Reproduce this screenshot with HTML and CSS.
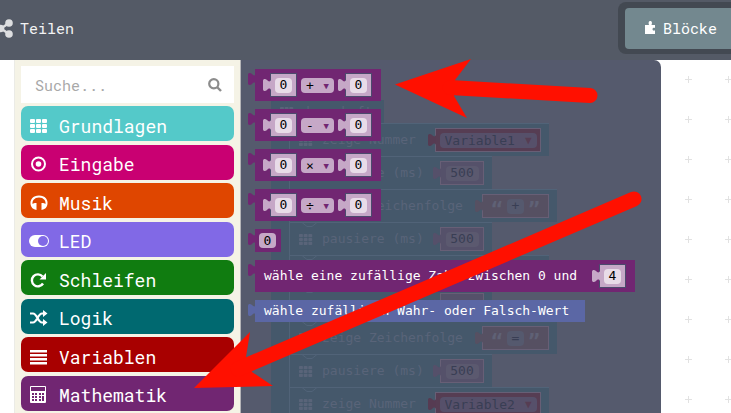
FILE: index.html
```html
<!DOCTYPE html>
<html lang="de">
<head>
<meta charset="utf-8">
<title>Mathematik</title>
<meta name="viewport" content="width=device-width, initial-scale=1">
<link rel="stylesheet" href="styles.css">
</head>
<body>
<svg class="defs" aria-hidden="true">
  <symbol id="tab" viewBox="0 0 8 14"><path d="M8 2C7 4 5.500 3.800 4 2C2.500 .5 0 .5 0 3V11C0 13.500 2.500 13.500 4 12C5.500 10.200 7 10 8 12Z"/></symbol>
  <symbol id="grid" viewBox="0 0 18 14"><path d="M0 1q0-1 1-1h3q1 0 1 1v2q0 1-1 1H1q-1 0-1-1zM6 1q0-1 1-1h3q1 0 1 1v2q0 1-1 1H7q-1 0-1-1zM12 1q0-1 1-1h3q1 0 1 1v2q0 1-1 1h-3q-1 0-1-1zM0 6q0-1 1-1h3q1 0 1 1v2q0 1-1 1H1q-1 0-1-1zM6 6q0-1 1-1h3q1 0 1 1v2q0 1-1 1H7q-1 0-1-1zM12 6q0-1 1-1h3q1 0 1 1v2q0 1-1 1h-3q-1 0-1-1zM0 11q0-1 1-1h3q1 0 1 1v2q0 1-1 1H1q-1 0-1-1zM6 11q0-1 1-1h3q1 0 1 1v2q0 1-1 1H7q-1 0-1-1zM12 11q0-1 1-1h3q1 0 1 1v2q0 1-1 1h-3q-1 0-1-1z"/></symbol>
  <symbol id="notch" viewBox="0 0 16 5"><path d="M0 .5L5 4.500H10L15 .5"/></symbol>
</svg>

<header class="bar">
  <a class="share" href="#teilen">
    <svg class="share-icon" viewBox="0 0 16 19" aria-hidden="true"><path d="M12 4L4 9.500L12 15" fill="none" stroke="currentColor" stroke-width="2.400"/><circle cx="12" cy="4" r="3.800"/><circle cx="3.500" cy="9.500" r="3.800"/><circle cx="12" cy="15" r="3.800"/></svg>
    Teilen
  </a>
  <div class="switch">
    <button class="mode" type="button">
      <svg class="puzzle" viewBox="0 0 11 13" aria-hidden="true"><path d="M0 4H4.200C3.300 2.500 3.400 0 5.300 0S7.300 2.500 6.400 4H10V7C9 6.300 7.500 6.800 7.500 8.200S9 10 10 9.300V13H0Z"/></svg>
      Blöcke
    </button>
  </div>
</header>

<main class="editor">
  <nav class="toolbox" aria-label="Kategorien">
    <div class="search">
      <input class="search-text" type="search" placeholder="Suche..." aria-label="Suche">
      <svg class="search-icon" viewBox="0 0 14 14" aria-hidden="true"><circle cx="5.800" cy="5.800" r="4.600" fill="none" stroke="currentColor" stroke-width="2.200"/><path d="M9 9L13 13" stroke="currentColor" stroke-width="2.400"/></svg>
    </div>
    <div class="categories">
      <button type="button" class="category basic"><svg viewBox="0 0 20 20"><use href="#grid" x="1" y="3" width="18" height="14"/></svg>Grundlagen</button>
      <button type="button" class="category input"><svg viewBox="0 0 20 20"><circle cx="9.500" cy="10" r="6.500" fill="none" stroke="currentColor" stroke-width="2"/><circle cx="9.500" cy="10" r="2.800"/></svg>Eingabe</button>
      <button type="button" class="category music"><svg viewBox="0 0 20 20"><path d="M3 13C1 7 5 3.500 10 3.500S19 7 17 13" fill="none" stroke="currentColor" stroke-width="2"/><path d="M7.500 10V17C4 16.500 2 14.500 2 12C3.500 10.500 5 10 7.500 10ZM12.500 10V17C16 16.500 18 14.500 18 12C16.500 10.500 15 10 12.500 10Z"/></svg>Musik</button>
      <button type="button" class="category led"><svg viewBox="0 0 20 20"><rect x="0" y="4" width="20" height="12" rx="6"/><circle class="knob" cx="14" cy="10" r="5"/></svg>LED</button>
      <button type="button" class="category loops"><svg viewBox="0 0 20 20"><path d="M14 13.500A6 6 0 1 1 13.500 6.500" fill="none" stroke="currentColor" stroke-width="2.400"/><path d="M17 3V9.500H10.500Z"/></svg>Schleifen</button>
      <button type="button" class="category logic"><svg viewBox="0 0 20 20"><path d="M1 5.500H4C8 5.500 9 14.500 13 14.500H15M1 14.500H4C8 14.500 9 5.500 13 5.500H15" fill="none" stroke="currentColor" stroke-width="2.200"/><path d="M14 2L18.500 5.500L14 9ZM14 11L18.500 14.500L14 18Z"/></svg>Logik</button>
      <button type="button" class="category variables"><svg viewBox="0 0 20 20"><path d="M1 3H18V5.500H1ZM1 7H18V9.500H1ZM1 11H18V13.500H1ZM1 15H18V17.500H1Z"/></svg>Variablen</button>
      <button type="button" class="category math"><svg viewBox="0 0 20 20"><path fill-rule="evenodd" d="M2 1H16Q17 1 17 2V17Q17 18 16 18H2Q1 18 1 17V2Q1 1 2 1ZM2 2V6H16V2ZM3 8V10H5V8ZM6 8V10H8V8ZM10 8V10H12V8ZM13 8V10H15V8ZM3 11V13H5V11ZM6 11V13H8V11ZM10 11V13H12V11ZM13 11V16H15V11ZM3 14V16H5V14ZM6 14V16H8V14ZM10 14V16H12V14Z"/></svg>Mathematik</button>
    </div>
  </nav>

  <section class="canvas">
    <div class="flyout">
      <div class="program">
        <div class="hat"><svg class="dots"><use href="#grid"/></svg>dauerhaft</div>
        <div class="stack">
          <div class="row var"><svg class="dots"><use href="#grid"/></svg>zeige Nummer
            <span class="plug dim red"><svg class="tab"><use href="#tab"/></svg><span class="box"><span class="drop"><select aria-label="Variable"><option>Variable1</option></select><i>▼</i></span></span></span></div>
          <div class="row num"><svg class="notch"><use href="#notch"/></svg><svg class="dots"><use href="#grid"/></svg>pausiere (ms)
            <span class="plug dim"><svg class="tab"><use href="#tab"/></svg><span class="box"><input class="pill" value="500" aria-label="Pause"></span></span></div>
          <div class="row text"><svg class="notch"><use href="#notch"/></svg><svg class="dots"><use href="#grid"/></svg>zeige Zeichenfolge
            <span class="plug dim quote"><svg class="tab"><use href="#tab"/></svg><span class="box"><b>“</b><input class="pill" value="+" aria-label="Zeichenfolge"><b>”</b></span></span></div>
          <div class="row num"><svg class="notch"><use href="#notch"/></svg><svg class="dots"><use href="#grid"/></svg>pausiere (ms)
            <span class="plug dim"><svg class="tab"><use href="#tab"/></svg><span class="box"><input class="pill" value="500" aria-label="Pause"></span></span></div>
          <div class="row var"><svg class="notch"><use href="#notch"/></svg></div>
          <div class="row num"><svg class="notch"><use href="#notch"/></svg>
            <span class="plug dim"><svg class="tab"><use href="#tab"/></svg><span class="box"></span></span></div>
          <div class="row text"><svg class="notch"><use href="#notch"/></svg><svg class="dots"><use href="#grid"/></svg>zeige Zeichenfolge
            <span class="plug dim quote"><svg class="tab"><use href="#tab"/></svg><span class="box"><b>“</b><input class="pill" value="=" aria-label="Zeichenfolge"><b>”</b></span></span></div>
          <div class="row num"><svg class="notch"><use href="#notch"/></svg><svg class="dots"><use href="#grid"/></svg>pausiere (ms)
            <span class="plug dim"><svg class="tab"><use href="#tab"/></svg><span class="box"><input class="pill" value="500" aria-label="Pause"></span></span></div>
          <div class="row var"><svg class="notch"><use href="#notch"/></svg><svg class="dots"><use href="#grid"/></svg>zeige Nummer
            <span class="plug dim red"><svg class="tab"><use href="#tab"/></svg><span class="box"><span class="drop"><select aria-label="Variable"><option>Variable2</option></select><i>▼</i></span></span></span></div>
        </div>
      </div>

      <div class="blocks">
        <div class="block"><svg class="tab"><use href="#tab"/></svg><div class="body">
          <span class="plug"><svg class="tab"><use href="#tab"/></svg><span class="box"><input class="pill" value="0" aria-label="Linker Wert"></span></span>
          <span class="drop"><select aria-label="Operator"><option>+</option></select><i>▼</i></span>
          <span class="plug"><svg class="tab"><use href="#tab"/></svg><span class="box"><input class="pill" value="0" aria-label="Rechter Wert"></span></span></div></div>
        <div class="block"><svg class="tab"><use href="#tab"/></svg><div class="body">
          <span class="plug"><svg class="tab"><use href="#tab"/></svg><span class="box"><input class="pill" value="0" aria-label="Linker Wert"></span></span>
          <span class="drop"><select aria-label="Operator"><option>-</option></select><i>▼</i></span>
          <span class="plug"><svg class="tab"><use href="#tab"/></svg><span class="box"><input class="pill" value="0" aria-label="Rechter Wert"></span></span></div></div>
        <div class="block"><svg class="tab"><use href="#tab"/></svg><div class="body">
          <span class="plug"><svg class="tab"><use href="#tab"/></svg><span class="box"><input class="pill" value="0" aria-label="Linker Wert"></span></span>
          <span class="drop"><select aria-label="Operator"><option>×</option></select><i>▼</i></span>
          <span class="plug"><svg class="tab"><use href="#tab"/></svg><span class="box"><input class="pill" value="0" aria-label="Rechter Wert"></span></span></div></div>
        <div class="block"><svg class="tab"><use href="#tab"/></svg><div class="body">
          <span class="plug"><svg class="tab"><use href="#tab"/></svg><span class="box"><input class="pill" value="0" aria-label="Linker Wert"></span></span>
          <span class="drop"><select aria-label="Operator"><option>÷</option></select><i>▼</i></span>
          <span class="plug"><svg class="tab"><use href="#tab"/></svg><span class="box"><input class="pill" value="0" aria-label="Rechter Wert"></span></span></div></div>
        <div class="block"><svg class="tab"><use href="#tab"/></svg><div class="body value"><input class="pill" value="0" aria-label="Zahl"></div></div>
        <div class="block"><svg class="tab"><use href="#tab"/></svg><div class="body random">wähle eine zufällige Zahl zwischen 0 und
          <span class="plug"><svg class="tab"><use href="#tab"/></svg><span class="box"><input class="pill" value="4" aria-label="Obergrenze"></span></span></div></div>
        <div class="block bool"><svg class="tab"><use href="#tab"/></svg><div class="body coin">wähle zufälligen Wahr- oder Falsch-Wert</div></div>
      </div>
    </div>
  </section>
</main>

<svg class="arrows" viewBox="0 0 731 413" aria-hidden="true">
  <path d="M395 84.500L471 59L455 80L454 96L467 118Z"/>
  <path class="shaft" d="M450 87.500L590 95.500"/>
  <path d="M194 388L250 332L246 357L252 372L273 386Z"/>
  <path class="shaft" d="M238 369L634 199"/>
</svg>
</body>
</html>
```
FILE: styles.css
```css
* { box-sizing: border-box; }

body {
  margin: 0;
  height: 100vh;
  display: flex;
  flex-direction: column;
  overflow: hidden;
  background: #fff;
  font-family: "Roboto Mono", "DejaVu Sans Mono", monospace;
  font-size: 15px;
}

svg { fill: currentColor; flex: none; }
button, input, select { font: inherit; color: inherit; border: 0; margin: 0; }
.defs { position: absolute; width: 0; height: 0; }

/* Header */
.bar {
  flex: none;
  height: 60px;
  display: flex;
  justify-content: space-between;
  align-items: flex-start;
  background: #545a66;
  color: #f2f3f4;
}
.share {
  height: 56px;
  display: flex;
  align-items: center;
  gap: 7px;
  color: inherit;
  text-decoration: none;
}
.share-icon { width: 16px; height: 19px; margin-left: -3px; color: #dddee0; }
.switch {
  margin-top: 2px;
  padding: 6px 0 5px 7px;
  border-radius: 8px 0 0 8px;
  background: #434952;
}
.mode {
  width: 106px;
  height: 41px;
  padding: 0 0 2px 20px;
  display: flex;
  align-items: center;
  gap: 7px;
  border-radius: 4px 0 0 4px;
  background: #73888f;
  color: #fff;
}
.puzzle { width: 11px; height: 13px; }

/* Toolbox */
.editor { flex: 1; min-height: 0; display: flex; padding-left: 14px; }
.toolbox {
  flex: none;
  width: 227px;
  padding: 6px 6px 2px 6px;
  display: flex;
  flex-direction: column;
  gap: 3px;
  border-left: 1px solid #ebebe6;
  border-right: 1px solid #b5b5b8;
  background: #f5f3e6;
}
.search {
  height: 37px;
  padding: 0 12px 0 14px;
  display: flex;
  align-items: center;
  background: #fff;
  color: #8c8c8c;
}
.search-text { flex: 1; min-width: 0; padding: 0; background: none; outline: 0; }
.search-text::placeholder { color: #a8a8a8; opacity: 1; }
.search-icon { width: 14px; height: 14px; }
.categories { flex: 1; display: flex; flex-direction: column; justify-content: space-between; }
.category {
  height: 35px;
  padding: 4px 8px 0;
  display: flex;
  align-items: center;
  gap: 10px;
  border-radius: 7px;
  color: #fff;
  font-size: 18px;
  text-align: left;
}
.category svg { width: 20px; height: 20px; }
.basic { background: #54c9c9; }
.input { background: #c90072; }
.music { background: #df4600; }
.led { background: #8169e6; }
.loops { background: #107c10; }
.logic { background: #006970; }
.variables { background: #a80000; }
.math { background: #712672; }
.knob { fill: #8169e6; }

/* Canvas and flyout */
.canvas {
  flex: 1;
  min-width: 0;
  background:
    conic-gradient(from 270deg at 7px 1px, #e2e2e2 90deg, transparent 0) 4px 19px / 40px 40px,
    conic-gradient(from 270deg at 1px 7px, #e2e2e2 90deg, transparent 0) 7px 16px / 40px 40px,
    #fff;
}
.flyout {
  position: relative;
  width: 420px;
  height: 100%;
  overflow: hidden;
  border-radius: 0 7px 0 0;
  background: #555a6d;
  font-family: "DejaVu Sans Mono", monospace;
  font-size: 13px;
  line-height: 16px;
}
.blocks {
  position: relative;
  padding: 9px 0 0 7px;
  display: flex;
  flex-direction: column;
  align-items: flex-start;
  gap: 8px;
}
.block { display: flex; align-items: flex-start; color: #712672; }
.tab { width: 8px; height: 14px; margin: 3px -1px 0 0; }
.body {
  height: 32px;
  padding: 0 9px 0 8px;
  display: flex;
  align-items: center;
  gap: 4px;
  background: #712672;
  color: #fff;
}
.plug { display: flex; align-items: center; color: #c6a8c7; }
.plug .tab { margin-top: 0; position: relative; }
.box {
  width: 27px;
  height: 24px;
  display: flex;
  align-items: center;
  justify-content: center;
  border: 1px solid #4b4a6d;
  background: #c6a8c7;
}
.pill {
  width: 17px;
  height: 15px;
  padding: 0;
  border-radius: 4px;
  background: #e8dce8;
  color: #000;
  text-align: center;
}
.drop {
  width: 33px;
  height: 15px;
  display: grid;
  align-items: center;
  border-radius: 4px;
  background: #c6a8c7;
  color: #000;
}
.drop select {
  grid-area: 1 / 1;
  width: 100%;
  height: 15px;
  padding: 0 0 0 5px;
  appearance: none;
  background: none;
}
.drop i {
  grid-area: 1 / 1;
  justify-self: end;
  padding-right: 5px;
  color: #712672;
  font-size: 9px;
  font-style: normal;
  pointer-events: none;
}
.value { height: 23px; padding: 0 5px 0 4px; }
.value .pill { background: #c6a8c7; }
.random { width: 380px; padding-left: 9px; justify-content: space-between; }
.bool { color: #5b67a5; }
.coin { width: 330px; height: 22px; padding-left: 9px; background: #5b67a5; }

/* Dimmed program behind the flyout */
.program { position: absolute; left: 30px; top: 40px; color: #596479; background: #45586b; width: 18px; }
.hat {
  width: 113px;
  height: 24px;
  padding-left: 9px;
  display: flex;
  align-items: center;
  gap: 8px;
  border-radius: 5px 0 0 0;
  background: #45586b;
}
.dots { width: 14px; height: 11px; }
.stack {
  width: 268px;
  margin-left: 18px;
  display: flex;
  flex-direction: column;
  gap: 1px;
}
.row {
  position: relative;
  height: 32px;
  padding: 0 8px 0 9px;
  display: flex;
  align-items: center;
  gap: 9px;
  border-left: 1px solid #516378;
  background: #45586b;
  box-shadow: 0 -1px #516378;
  white-space: nowrap;
}
.var { width: 260px; }
.num { width: 203px; }
.text { width: 268px; }
.notch {
  position: absolute;
  left: 12px;
  top: -1px;
  width: 16px;
  height: 5px;
  fill: none;
  stroke: #516378;
}
.dim { margin-left: auto; color: #55506a; }
.dim .box { width: 44px; border-color: #675f76; background: #55516a; }
.dim .pill { width: 33px; background: #5b596f; color: #393e54; }
.red { color: #563b52; }
.red .box { width: 106px; background: #563d53; }
.red .drop { width: 97px; background: #56506a; color: #393e54; }
.red .drop i { color: #563d53; font-size: 11px; }
.quote { color: #565062; }
.quote .box { width: 67px; gap: 4px; background: #565062; }
.quote .pill { width: 17px; background: #55596e; }
.quote b { padding-top: 6px; color: #5f6175; font-size: 20px; }

/* Annotation arrows */
.arrows {
  position: absolute;
  left: 0;
  top: 0;
  width: 731px;
  height: 413px;
  color: #ff1000;
  pointer-events: none;
}
.shaft { fill: none; stroke: currentColor; stroke-width: 15; stroke-linecap: round; }
```
